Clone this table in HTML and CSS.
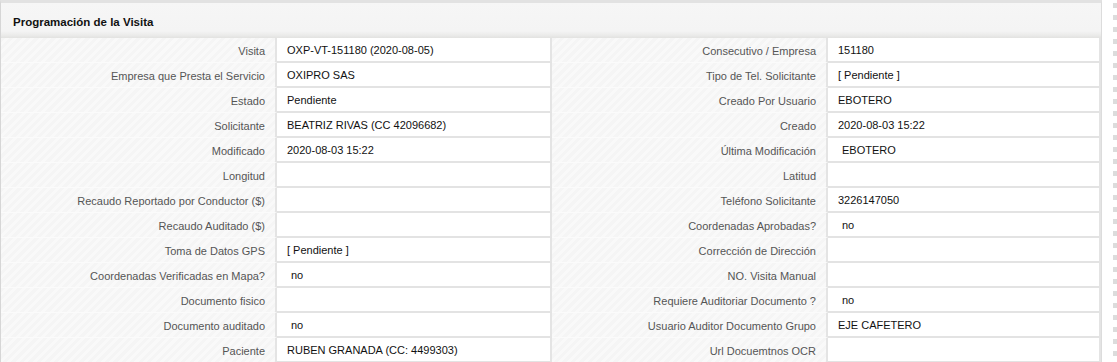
FILE: index.html
```html
<!DOCTYPE html>
<html lang="es">
<head>
<meta charset="utf-8">
<title>Programación de la Visita</title>
<link rel="stylesheet" href="styles.css">
</head>
<body>
<div class="page">
  <div class="panel">
    <div class="panel-head">Programación de la Visita</div>
    <div class="grid">
      <div class="lbl">Visita</div><div class="val">OXP-VT-151180 (2020-08-05)</div>
      <div class="lbl">Consecutivo / Empresa</div><div class="val">151180</div>

      <div class="lbl">Empresa que Presta el Servicio</div><div class="val">OXIPRO SAS</div>
      <div class="lbl">Tipo de Tel. Solicitante</div><div class="val">[ Pendiente ]</div>

      <div class="lbl">Estado</div><div class="val">Pendiente</div>
      <div class="lbl">Creado Por Usuario</div><div class="val">EBOTERO</div>

      <div class="lbl">Solicitante</div><div class="val">BEATRIZ RIVAS (CC 42096682)</div>
      <div class="lbl">Creado</div><div class="val">2020-08-03 15:22</div>

      <div class="lbl">Modificado</div><div class="val">2020-08-03 15:22</div>
      <div class="lbl">Última Modificación</div><div class="val sp">EBOTERO</div>

      <div class="lbl">Longitud</div><div class="val"></div>
      <div class="lbl">Latitud</div><div class="val"></div>

      <div class="lbl">Recaudo Reportado por Conductor ($)</div><div class="val"></div>
      <div class="lbl">Teléfono Solicitante</div><div class="val">3226147050</div>

      <div class="lbl">Recaudo Auditado ($)</div><div class="val"></div>
      <div class="lbl">Coordenadas Aprobadas?</div><div class="val sp">no</div>

      <div class="lbl">Toma de Datos GPS</div><div class="val">[ Pendiente ]</div>
      <div class="lbl">Corrección de Dirección</div><div class="val"></div>

      <div class="lbl">Coordenadas Verificadas en Mapa?</div><div class="val sp">no</div>
      <div class="lbl">NO. Visita Manual</div><div class="val"></div>

      <div class="lbl">Documento fisico</div><div class="val"></div>
      <div class="lbl">Requiere Auditoriar Documento ?</div><div class="val sp">no</div>

      <div class="lbl">Documento auditado</div><div class="val sp">no</div>
      <div class="lbl">Usuario Auditor Documento Grupo</div><div class="val">EJE CAFETERO</div>

      <div class="lbl">Paciente</div><div class="val">RUBEN GRANADA (CC: 4499303)</div>
      <div class="lbl">Url Docuemtnos OCR</div><div class="val"></div>
    </div>
  </div>
  <div class="scroll"></div>
</div>
</body>
</html>
```

FILE: styles.css
```css
html, body {
  margin: 0;
  padding: 0;
  background: #ffffff;
}
body {
  font-family: "Liberation Sans", Arial, sans-serif;
  font-size: 11px;
  color: #222;
  overflow: hidden;
}
.page {
  display: flex;
  width: 1117px;
  height: 362px;
  overflow: hidden;
}
.panel {
  width: 1102px;
  border-right: 1px solid #dcdcdc;
  border-left: 1px solid #d6d6d6;
  border-top: 3px solid #e2e2e2;
  box-sizing: border-box;
  flex: none;
}
.panel-head {
  height: 35px;
  box-sizing: border-box;
  padding: 2px 0 0 12px;
  display: flex;
  align-items: center;
  font-weight: bold;
  font-size: 11.5px;
  color: #111;
  background: linear-gradient(to bottom, #f6f6f6 0%, #f4f4f4 80%, #ebebea 92%, #e2e2e0 100%);
}
.grid {
  display: grid;
  grid-template-columns: 276px 275px 276px 273px;
  grid-auto-rows: 25px;
}
.lbl {
  background: repeating-linear-gradient(135deg, #f5f5f5 0px, #f5f5f5 3px, #f9f9f9 3px, #f9f9f9 6px);
  color: #555;
  padding: 2px 10px 0 0;
  display: flex;
  align-items: center;
  justify-content: flex-end;
  border-bottom: 1px solid #fbfbfb;
  border-right: 2px solid #e4e4e4;
  box-sizing: border-box;
  white-space: nowrap;
}
.val {
  background: #ffffff;
  color: #111;
  padding: 1px 0 0 10px;
  display: flex;
  align-items: center;
  border-bottom: 2px solid #e3e3e3;
  border-right: 2px solid #e4e4e4;
  box-sizing: border-box;
  white-space: nowrap;
}
.val.sp {
  padding-left: 14px;
}
.scroll {
  width: 4px;
  margin-left: 11px;
  background: repeating-linear-gradient(to bottom, transparent 0px, transparent 3px, #dcdcdc 3px, #dcdcdc 8px, transparent 8px, transparent 12px);
}
```
